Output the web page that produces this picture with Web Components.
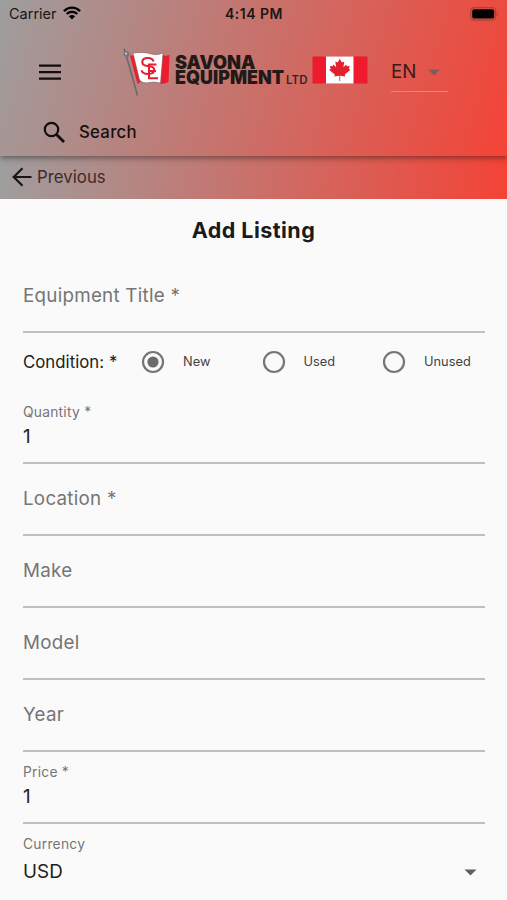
<!DOCTYPE html>
<html lang="en"><head><meta charset="utf-8"><title>Add Listing</title>
<style>
html,body{margin:0;padding:0;background:#fafafa}
body{width:507px;height:900px;overflow:hidden;font-family:Inter,"Liberation Sans",sans-serif;color:#212121}
</style></head><body>
<listing-page></listing-page>
<script>
const define=(name,html)=>customElements.define(name,class extends HTMLElement{
  constructor(){super();this.attachShadow({mode:'open'}).innerHTML=html;}
});

define('status-bar',`<style>
:host{display:grid;grid-template-columns:1fr auto 1fr;align-items:center;height:27px;padding:0 8px 0 9px;box-sizing:border-box;color:#1c1614}
.l{display:flex;align-items:center;gap:6px;font-size:14.5px;letter-spacing:0}
.l svg{margin-top:-2px}
.t{font-size:14px;font-weight:600;letter-spacing:.5px}
.r{display:flex;justify-content:flex-end}
svg{display:block}
</style>
<div class="l"><span>Carrier</span><svg width="18" height="14" viewBox="0 0 18 14" fill="none" stroke="#000" stroke-width="2.3"><path d="M.9 5.1C5.5.4 12.500.4 17.100 5.1M3.700 8C6.800 5 11.200 5 14.300 8"/><path d="M9 13.400 5.900 10.300Q9 7.800 12.100 10.300Z" fill="#000" stroke="none"/></svg></div>
<div class="t">4:14 PM</div>
<div class="r"><svg width="29" height="14" viewBox="0 0 29 14"><rect x=".7" y=".7" width="25" height="12.400" rx="3.600" fill="none" stroke="#a4443a" stroke-width="1.200"/><rect x="2.200" y="2.200" width="22" height="9.400" rx="2.200"/><path d="M27 4.700q2 2.200 0 4.400z" fill="#a4443a"/></svg></div>`);

define('brand-logo',`<style>:host{display:block}svg{display:block}text{font-family:Inter,"Liberation Sans",sans-serif}</style>
<svg width="246" height="52" viewBox="122 46 246 52">
<path d="M130 55.500 135.500 55.500 142 80.500 137.500 84Z" fill="#ed1c2e"/>
<path d="M160 54.500Q165 56.500 169.500 55L168.500 82Q164.500 84.500 160 83.500Z" fill="#ed1c2e"/>
<path d="M133 53Q145 51.500 151 54Q157 56 163 53L160.500 83Q154 81.500 149 82.500Q143 84 139.500 80Z" fill="#fff" stroke="#6c5558" stroke-width=".5"/>
<path d="M125 51 137.500 95.500" stroke="#706a6d" stroke-width="1.700"/>
<path d="M124 48.500 126 54.500" stroke="#626065" stroke-width="1.200"/><circle cx="126.500" cy="54" r="3" fill="#77757a"/><circle cx="126" cy="53.500" r="1" fill="#ddd"/>
<g fill="none" stroke="#e51f30" stroke-width="2"><path d="M153.500 61.500Q152.500 58.100 148 58.100Q142.300 58.100 142.300 62.200Q142.300 65.500 148 66Q154.300 66.500 154.300 70Q154.300 73.900 148 73.900Q142.300 73.900 141.500 70.200"/><path d="M156.500 64.500H149V78.300H158M149 71H156"/></g>
<g fill="#211a19" font-weight="900"><text x="175" y="68.700" font-size="18.500" textLength="80.500" lengthAdjust="spacingAndGlyphs">SAVONA</text><text x="175" y="84" font-size="18.500" textLength="109" lengthAdjust="spacingAndGlyphs">EQUIPMENT</text></g>
<text x="286" y="84" font-size="11.500" font-weight="600" fill="#352422" textLength="21.500" lengthAdjust="spacing">LTD</text>
<rect x="312.500" y="56.500" width="55" height="27" fill="#ed1b2d"/><rect x="326" y="56.500" width="27.500" height="27" fill="#fff"/>
<path d="M339.800 58.800 341.900 62.600 344.300 61.600 343.400 67.200 346.200 64.600 346.900 66.300 349.700 65.900 348.900 68.800 350.300 69.900 344.800 74.500 345.200 76.400 340.200 75.800 340.200 81h-.8L339.400 75.800 334.400 76.400 334.800 74.500 329.300 69.900 330.700 68.800 329.900 65.900 332.700 66.300 333.400 64.600 336.200 67.200 335.300 61.600 337.700 62.600Z" fill="#e3202c"/>
</svg>`);

define('language-picker',`<style>:host{display:flex;align-items:center;gap:11px;width:57px;height:40px;margin-top:1px;border-bottom:1px solid #ee8279;box-sizing:border-box;font-size:18.800px;color:#3b1b19}
svg{display:block;margin-top:1px}</style><slot></slot><svg width="14" height="7" viewBox="0 0 14 7"><path d="M1 .5h12L7 6.500z" fill="#7b5e5a"/></svg>`);

define('app-header',`<style>
:host{display:block;height:156px;position:relative;z-index:1;background:linear-gradient(107.100deg,#9e9e9e,#f44336);box-shadow:0 2px 6px rgba(0,0,0,.42)}
.bar{display:flex;height:89px;align-items:center;padding-left:39px}
.menu{display:block;width:22px;height:16px;margin-right:61px}
language-picker{margin-left:23px}
.search{display:flex;align-items:center;gap:13px;height:32px;padding-left:43px;font-size:16.800px;font-weight:500;letter-spacing:.25px;color:#151010}
svg{display:block}
</style>
<status-bar></status-bar>
<div class="bar"><svg class="menu" viewBox="0 0 22 16"><path d="M0 1.600h22M0 8.100h22M0 14.600h22" stroke="#120e0e" stroke-width="2.300"/></svg><brand-logo></brand-logo><language-picker>EN</language-picker></div>
<div class="search"><svg width="23" height="23" viewBox="0 0 23 23" fill="none" stroke="#120e0e"><circle cx="8.500" cy="8.500" r="6.700" stroke-width="2.200"/><path d="m13.500 13.500 7.500 7.500" stroke-width="2.900"/></svg><slot></slot></div>`);

define('back-bar',`<style>:host{display:flex;align-items:center;gap:5px;height:42.500px;box-sizing:border-box;padding-left:12px;font-size:16.800px;letter-spacing:.02px;color:#44292a;background:linear-gradient(94.700deg,#9e9e9e,#f44336)}
svg{display:block}</style><svg width="20" height="20" viewBox="0 0 20 20" fill="none" stroke="#1a1414" stroke-width="2.200"><path d="M19.500 10H2M10.500 1.200 1.700 10l8.800 8.800"/></svg><slot></slot>`);

define('form-field',`<style>
:host{display:flex;flex-direction:column;height:72px;box-sizing:border-box;border-bottom:2px solid #c0c0c0;padding-top:24px;color:#757575;font-size:18.800px;line-height:22px;letter-spacing:.25px}
:host([filled]){padding-top:11px}
:host([last]){border:0}
.v{display:none}
:host([filled]) .l{font-size:13.800px;line-height:18px}
:host([filled]) .v{display:flex;align-items:center;justify-content:space-between;margin-top:4px;color:#212121;line-height:24px;letter-spacing:.1px}
:host([last]) .v{margin-top:7px;padding-right:8px}
</style><div class="l"><slot></slot></div><div class="v"><slot name="value"></slot><slot name="icon"></slot></div>`);

define('radio-option',`<style>:host{display:flex;flex:none;align-items:center;gap:18px;width:120.500px;font-size:12.800px;color:#424242}
svg{display:block}.dot{display:none}:host([checked]) .dot{display:block}</style>
<svg width="24" height="24" viewBox="0 0 24 24"><circle cx="12" cy="12" r="10" fill="none" stroke="#757575" stroke-width="2.200"/><circle class="dot" cx="12" cy="12" r="5.600" fill="#6b6b6b"/></svg><span><slot></slot></span>`);

define('condition-row',`<style>:host{display:flex;align-items:center;height:59px;padding-bottom:2px;box-sizing:border-box;font-size:16.800px;letter-spacing:.02px;color:#212121}
.c{width:118px;flex:none;white-space:nowrap}</style><div class="c">Condition: *</div><slot></slot>`);

define('listing-page',`<style>
:host{display:block}
h1{margin:0;height:63.500px;line-height:62px;text-align:center;font-size:21.500px;font-weight:650;letter-spacing:.45px;color:#1b1b1b}
form{padding:0 22px 0 23px}
svg{display:block}
</style>
<app-header>Search</app-header>
<back-bar>Previous</back-bar>
<h1>Add Listing</h1>
<form>
<form-field style="height:71px;padding-top:23px">Equipment Title *</form-field>
<condition-row><radio-option checked>New</radio-option><radio-option>Used</radio-option><radio-option>Unused</radio-option></condition-row>
<form-field filled>Quantity *<span slot="value">1</span></form-field>
<form-field>Location *</form-field>
<form-field>Make</form-field>
<form-field>Model</form-field>
<form-field>Year</form-field>
<form-field filled>Price *<span slot="value">1</span></form-field>
<form-field filled last>Currency<span slot="value">USD</span><svg slot="icon" width="13" height="7" viewBox="0 0 13 7"><path d="M.5.500h12l-6 6z" fill="#5f5f5f"/></svg></form-field>
</form>`);
</script>
</body></html>
